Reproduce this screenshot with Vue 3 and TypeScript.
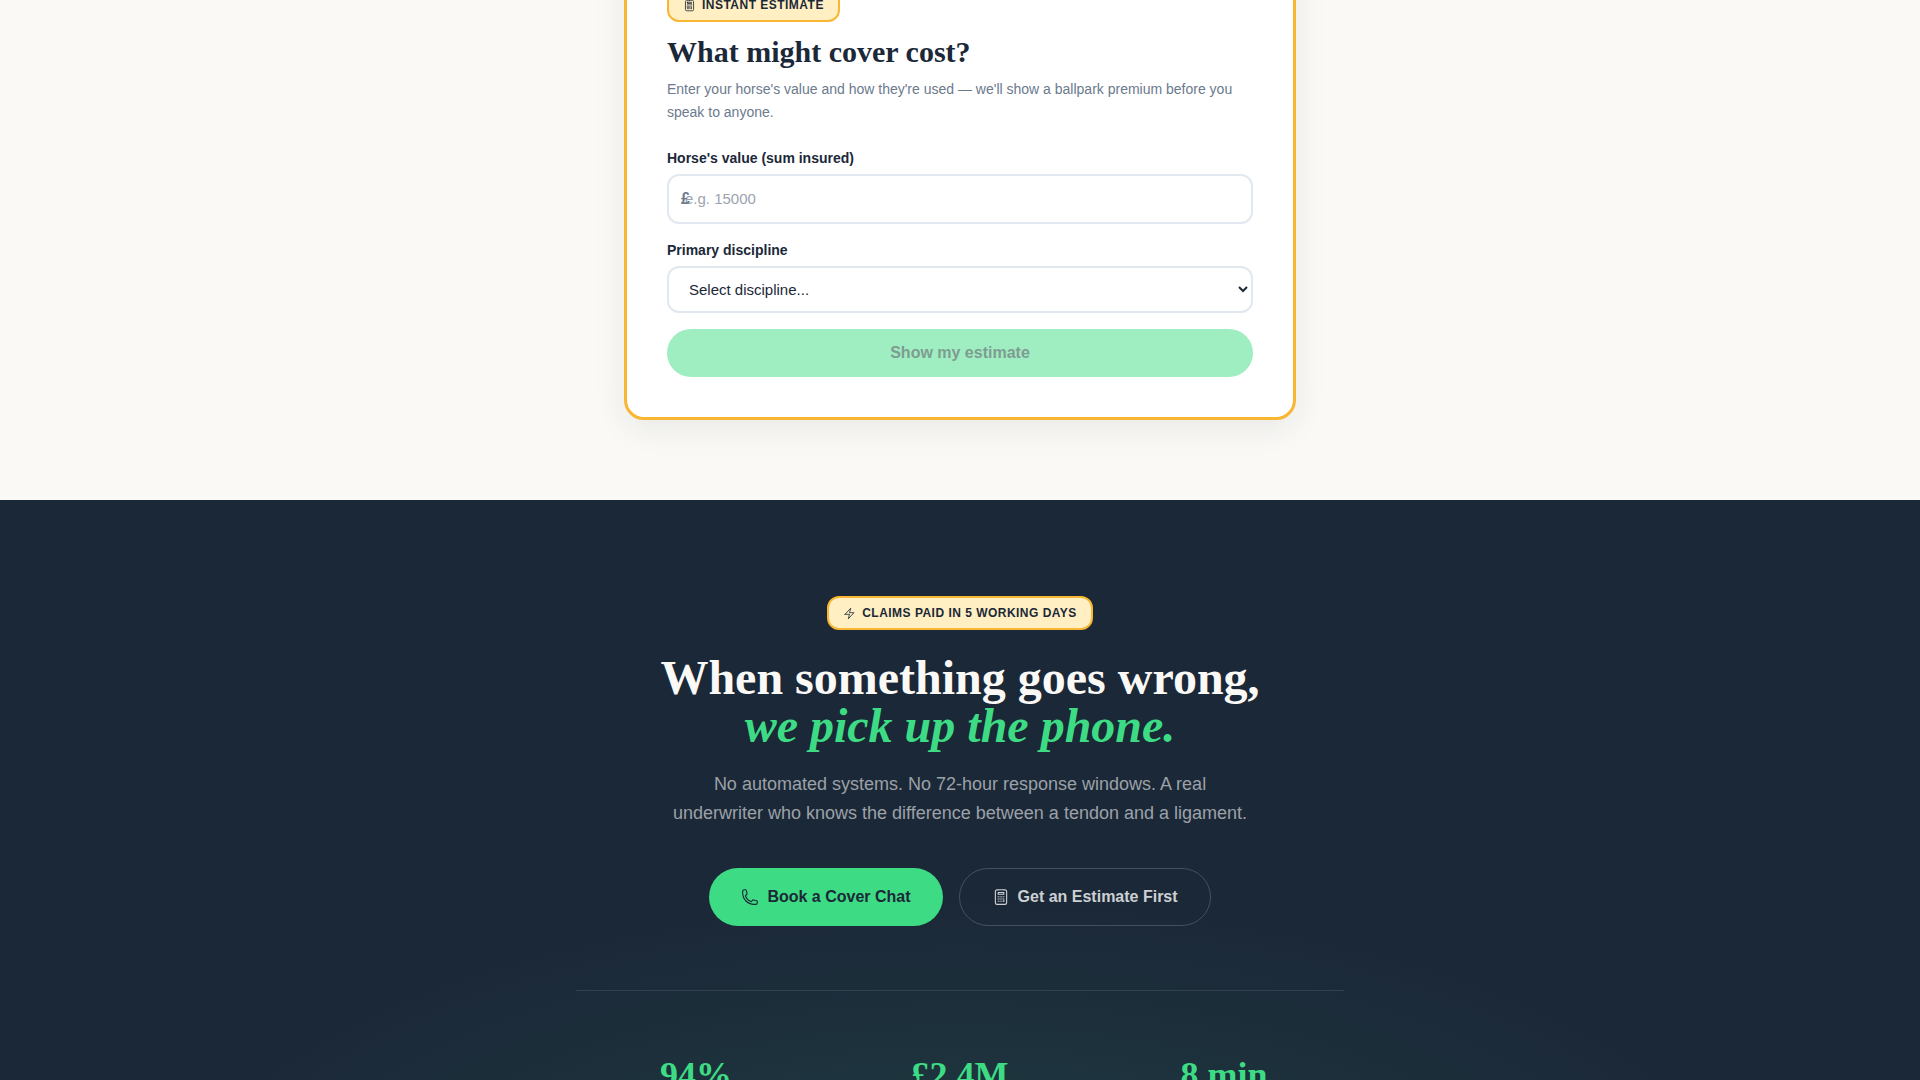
<script setup lang="ts">
import { ref } from 'vue'

const calculatorPath =
  'M15.75 15.75V18m-7.5-6.75h.008v.008H8.25v-.008Zm0 2.25h.008v.008H8.25V13.5Zm0 2.25h.008v.008H8.25v-.008Zm0 2.25h.008v.008H8.25V18Zm2.498-6.75h.007v.008h-.007v-.008Zm0 2.25h.007v.008h-.007V13.5Zm0 2.25h.007v.008h-.007v-.008Zm0 2.25h.007v.008h-.007V18Zm2.504-6.75h.008v.008h-.008v-.008Zm0 2.25h.008v.008h-.008V13.5Zm0 2.25h.008v.008h-.008v-.008Zm0 2.25h.008v.008h-.008V18Zm2.498-6.75h.008v.008h-.008v-.008Zm0 2.25h.008v.008h-.008V13.5ZM8.25 6h7.5v2.25h-7.5V6ZM12 2.25c-1.892 0-3.758.11-5.593.322C5.307 2.7 4.5 3.65 4.5 4.757V19.5a2.25 2.25 0 0 0 2.25 2.25h10.5a2.25 2.25 0 0 0 2.25-2.25V4.757c0-1.108-.806-2.057-1.907-2.185A48.507 48.507 0 0 0 12 2.25Z'
const boltPath = 'm3.75 13.5 10.5-11.25L12 10.5h8.25L9.75 21.75 12 13.5H3.75Z'
const phonePath =
  'M2.25 6.75c0 8.284 6.716 15 15 15h2.25a2.25 2.25 0 0 0 2.25-2.25v-1.372c0-.516-.351-.966-.852-1.091l-4.423-1.106c-.44-.11-.902.055-1.173.417l-.97 1.293c-.282.376-.769.542-1.21.38a12.035 12.035 0 0 1-7.143-7.143c-.162-.441.004-.928.38-1.21l1.293-.97c.363-.271.527-.734.417-1.173L6.963 3.102a1.125 1.125 0 0 0-1.091-.852H4.5A2.25 2.25 0 0 0 2.25 4.5v2.25Z'

const horseValue = ref<string>('')
const discipline = ref<string>('')
const stats: string[] = ['94%', '£2.4M', '8 min']
</script>

<template>
  <main class="page">
    <section class="estimate">
      <form id="estimate" class="card" @submit.prevent>
        <span class="badge">
          <svg class="icon" viewBox="0 0 24 24" aria-hidden="true"><path :d="calculatorPath" /></svg>
          INSTANT ESTIMATE
        </span>
        <h2 class="card-title">What might cover cost?</h2>
        <p class="card-lead">
          Enter your horse's value and how they're used — we'll show a ballpark premium before you
          speak to anyone.
        </p>
        <label class="label" for="horse-value">Horse's value (sum insured)</label>
        <div class="money">
          <span class="currency">£</span>
          <input id="horse-value" v-model="horseValue" class="field input" type="text" inputmode="numeric" placeholder="e.g. 15000" />
        </div>
        <label class="label" for="discipline">Primary discipline</label>
        <select id="discipline" v-model="discipline" class="field select">
          <option value="">Select discipline...</option>
        </select>
        <button class="submit" type="submit" :disabled="!horseValue || !discipline">Show my estimate</button>
      </form>
    </section>

    <section class="closing">
      <span class="badge">
        <svg class="icon" viewBox="0 0 24 24" aria-hidden="true"><path :d="boltPath" /></svg>
        CLAIMS PAID IN 5 WORKING DAYS
      </span>
      <h2 class="headline">When something goes wrong,<br /><em>we pick up the phone.</em></h2>
      <p class="lead">
        No automated systems. No 72-hour response windows. A real underwriter who knows the
        difference between a tendon and a ligament.
      </p>
      <div class="actions">
        <a class="button primary" href="#book">
          <svg class="icon" viewBox="0 0 24 24" aria-hidden="true"><path :d="phonePath" /></svg>
          Book a Cover Chat
        </a>
        <a class="button outline" href="#estimate">
          <svg class="icon" viewBox="0 0 24 24" aria-hidden="true"><path :d="calculatorPath" /></svg>
          Get an Estimate First
        </a>
      </div>
      <div class="stats">
        <strong v-for="stat in stats" :key="stat" class="stat">{{ stat }}</strong>
      </div>
    </section>
  </main>
</template>

<style>
body {
  margin: 0;
  background: #faf9f6;
}
</style>

<style scoped>
*,
*::before,
*::after {
  box-sizing: border-box;
}

.page {
  display: flex;
  flex-direction: column;
  height: 100vh;
  overflow: hidden;
  font-family: "Liberation Sans", Arial, sans-serif;
  font-size: 16px;
  line-height: 24px;
  color: #1b2838;
}

.estimate {
  flex: none;
  padding: 0 24px 80px;
  background: #faf9f6;
}

.card {
  display: flex;
  flex-direction: column;
  max-width: 672px;
  margin: -55px auto 0;
  padding: 40px;
  border: 3px solid #f9b632;
  border-radius: 20px;
  background: #fff;
  box-shadow: 0 8px 32px rgba(27, 40, 56, 0.08);
}

.badge {
  display: inline-flex;
  align-items: center;
  align-self: flex-start;
  gap: 6px;
  padding: 6px 14px;
  border: 2px solid #f9b632;
  border-radius: 12px;
  background: #ffefc2;
  color: #1b2838;
  font-size: 12px;
  font-weight: 700;
  line-height: 18px;
  letter-spacing: 0.04em;
}

.icon {
  flex: none;
  width: 13px;
  height: 13px;
  fill: none;
  stroke: currentColor;
  stroke-width: 1.5;
  stroke-linecap: round;
  stroke-linejoin: round;
}

.card-title {
  margin: 12px 0 8px;
  font-family: "Liberation Serif", "Times New Roman", serif;
  font-size: 30px;
  font-weight: 700;
  line-height: 36px;
}

.card-lead {
  margin: 0 0 24px;
  color: #6b7a8d;
  font-size: 14px;
  line-height: 23px;
}

.label {
  margin-bottom: 6px;
  font-size: 14px;
  font-weight: 700;
  line-height: 20px;
}

.money {
  position: relative;
  margin-bottom: 16px;
}

.currency {
  position: absolute;
  top: 13px;
  left: 14px;
  color: #6b7a8d;
  font-weight: 700;
}

.field {
  display: block;
  width: 100%;
  border: 2px solid #e2e8f0;
  border-radius: 12px;
  background: #fff;
  color: #1b2838;
  font-family: inherit;
  font-size: 15px;
}

.input {
  height: 50px;
  padding: 12px 16px 14px;
}

.input::placeholder {
  color: #9ca3af;
}

.select {
  height: 47px;
  margin-bottom: 16px;
  padding: 12px 0 12px 16px;
}

.submit {
  height: 48px;
  border: 0;
  border-radius: 24px;
  background: #3ddc84;
  color: #1b2838;
  font-family: inherit;
  font-size: 16px;
  font-weight: 700;
}

.submit:disabled {
  background: #9eeec2;
  color: #7f9c91;
}

.closing {
  display: flex;
  flex: 1 0 auto;
  flex-direction: column;
  align-items: center;
  padding: 96px 24px 0;
  background:
    radial-gradient(42% 340px at 50% 740px, rgba(61, 220, 132, 0.12), transparent),
    #1b2838;
  text-align: center;
}

.closing .badge {
  align-self: center;
}

.headline {
  margin: 24px 0 20px;
  color: #faf9f6;
  font-family: "Liberation Serif", "Times New Roman", serif;
  font-size: 48px;
  font-weight: 700;
  line-height: 48px;
}

.headline em {
  color: #3ddc84;
}

.lead {
  max-width: 576px;
  margin: 0 0 40px;
  color: #9ca1a7;
  font-size: 18px;
  line-height: 29px;
}

.actions {
  display: flex;
  flex-wrap: wrap;
  justify-content: center;
  gap: 16px;
}

.button {
  display: inline-flex;
  align-items: center;
  gap: 8px;
  padding: 16px 32px;
  border-radius: 32px;
  font-weight: 700;
  text-decoration: none;
}

.button .icon {
  width: 18px;
  height: 18px;
}

.primary {
  background: #3ddc84;
  color: #1b2838;
}

.outline {
  border: 1px solid #435060;
  color: #cdd0d2;
}

.stats {
  display: grid;
  grid-template-columns: repeat(3, 1fr);
  gap: 24px;
  width: 100%;
  max-width: 768px;
  margin-top: 64px;
  padding-top: 64px;
  border-top: 1px solid #33414e;
}

.stat {
  color: #3ddc84;
  font-family: "Liberation Serif", "Times New Roman", serif;
  font-size: 36px;
  line-height: 40px;
}
</style>
